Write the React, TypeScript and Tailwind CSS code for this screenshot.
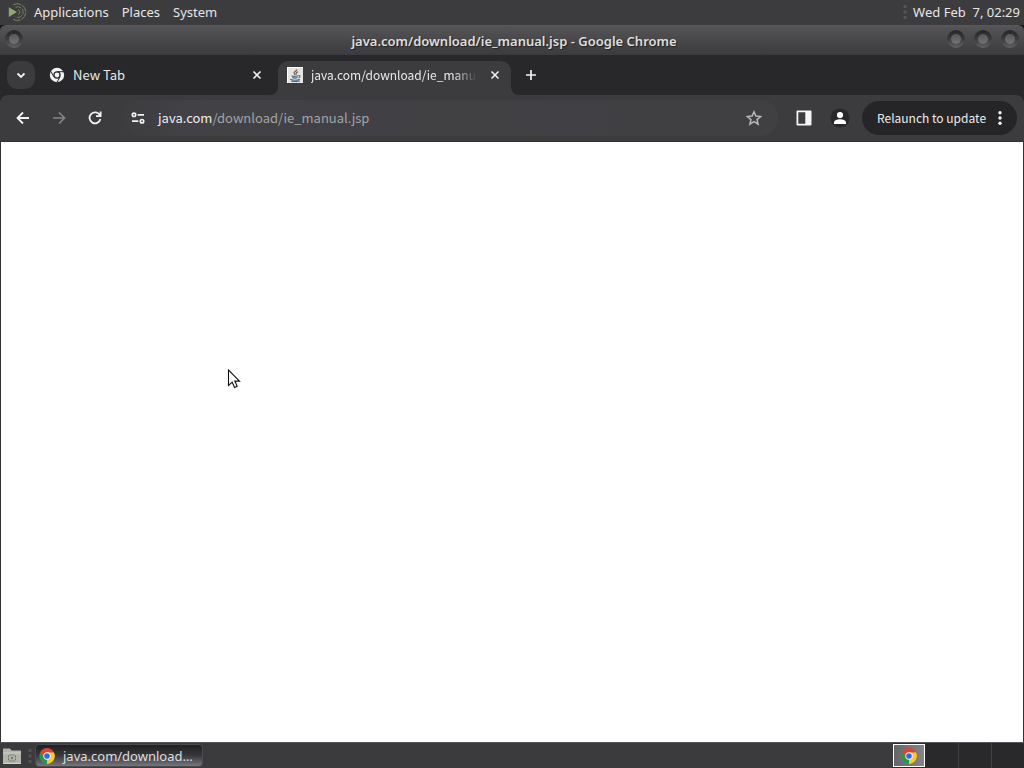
import type { ReactNode } from "react";

function ChromeLogo({ className }: { className?: string }) {
  return (
    <svg viewBox="0 0 48 48" className={className} aria-hidden="true">
      <path d="M24 24 L4.1 12.5 A23 23 0 0 1 43.9 12.5 Z" fill="#dd4436" />
      <path d="M24 24 L43.9 12.5 A23 23 0 0 1 24 47 Z" fill="#fbc92f" />
      <path d="M24 24 L24 47 A23 23 0 0 1 4.1 12.5 Z" fill="#279847" />
      <path d="M24 13.5 H44.4 L43.9 12.5 A23 23 0 0 0 4.1 12.5 L15 29 Z" fill="#dd4436" />
      <path d="M33.1 29.2 L22.9 47 A23 23 0 0 0 44.4 13.5 H24 Z" fill="#fbc92f" />
      <circle cx="24" cy="24" r="11" fill="#fff" />
      <circle cx="24" cy="24" r="8.5" fill="#2f6de0" />
    </svg>
  );
}

function ChromeMono() {
  return (
    <svg viewBox="0 0 16 16" className="size-4 shrink-0" aria-hidden="true">
      <circle cx="8" cy="8" r="7.2" fill="#f2f2f4" />
      <circle cx="8" cy="8" r="3.7" fill="#29292b" />
      <circle cx="8" cy="8" r="2.4" fill="#f2f2f4" />
      <path d="M8 4.7h6.8M4.9 9.8 1.6 4.1M11.1 9.8 7.8 15.5" stroke="#29292b" strokeWidth="1" />
    </svg>
  );
}

function JavaIcon() {
  return (
    <svg viewBox="0 0 16 16" className="size-4 shrink-0" aria-hidden="true">
      <rect width="16" height="16" fill="#e4e4e1" />
      <path d="M0 .5h16M.5 0v16" stroke="#fff" />
      <path d="M9.8 2.4c.5 1.8-3.9 2.4-2.4 4.4l.8 1.2M11.2 4.8C9.2 5.4 8.6 6.1 9.5 7.6" fill="none" stroke="#75604e" strokeWidth="1.2" />
      <path d="M4.5 8.8c1.8.7 4.9.6 6.5 0M5.2 10.6c1.6.6 3.6.6 5.2 0M11.4 8.6c2.2-.5 2 1.5.2 2.1M3.2 12.3c2.8 1.2 7 1 9.6 0M4.2 14c2.7.7 6.2.6 8.6-.3" fill="none" stroke="#44678c" strokeWidth="1.1" />
    </svg>
  );
}

function MateLogo() {
  return (
    <svg viewBox="0 0 20 20" className="size-5" fill="none" aria-hidden="true">
      <path d="M.8 5.2 9 10 .8 15Z" fill="#8fa66d" />
      <path d="M5.2 2.8A8.4 8.4 0 1 1 5.2 17.4" stroke="#76865f" strokeDasharray="8 1" />
      <path d="M7.5 5.2A5.4 5.4 0 1 1 7.5 15" stroke="#76865f" strokeDasharray="6 1" />
      <path d="M10 7.6a2.6 2.6 0 0 1 0 5" stroke="#76865f" />
    </svg>
  );
}

function WindowButton({ label }: { label: string }) {
  return (
    <button
      aria-label={label}
      className="flex size-[18px] items-center justify-center rounded-full bg-linear-to-b from-[#252527] via-[#3c3c3e] to-[#626361]"
    >
      <span className="size-2.5 rounded-full bg-linear-to-b from-[#58585a] to-[#737375]" />
    </button>
  );
}

function Close({ label }: { label: string }) {
  return (
    <button aria-label={label} className="flex size-4 shrink-0 items-center justify-center">
      <svg viewBox="0 0 16 16" className="size-4" aria-hidden="true">
        <path d="m4.5 4.5 7 7m0-7-7 7" stroke="#f0f0f2" strokeWidth="1.6" />
      </svg>
    </button>
  );
}

function Grip() {
  return (
    <svg viewBox="0 0 4 16" className="h-4 w-1" aria-hidden="true">
      <path d="M2 1v14" stroke="#555553" strokeWidth="3" strokeDasharray="3 2.5" />
    </svg>
  );
}

function ToolButton({ label, children }: { label: string; children: ReactNode }) {
  return (
    <button aria-label={label} className="flex size-5 shrink-0 items-center justify-center">
      {children}
    </button>
  );
}

function TopPanel() {
  return (
    <header className="flex h-[25px] items-center bg-[#3c3c3e] pr-1 pb-0.5 pl-2 text-[#e6e6e6]">
      <nav className="flex items-center">
        <MateLogo />
        <button className="ml-1.5">Applications</button>
        <button className="ml-[13px]">Places</button>
        <button className="ml-[13px]">System</button>
      </nav>
      <div className="ml-auto flex items-center gap-1.5">
        <Grip />
        <time className="whitespace-pre">Wed Feb  7, 02:29</time>
      </div>
    </header>
  );
}

function TitleBar() {
  return (
    <div className="flex h-[30px] items-center rounded-t-md border-t border-[#59595b] bg-linear-to-b from-[#555557] to-[#3b3b3d] px-[5px] pb-1">
      <div className="flex w-[76px]">
        <WindowButton label="Window menu" />
      </div>
      <h1 className="flex-1 pt-1 text-center font-semibold text-[#dededf] [text-shadow:1px_1px_1px_#222]">
        java.com/download/ie_manual.jsp - Google Chrome
      </h1>
      <div className="flex w-[72px] justify-end gap-[9px]">
        <WindowButton label="Minimize" />
        <WindowButton label="Maximize" />
        <WindowButton label="Close window" />
      </div>
    </div>
  );
}

function TabStrip() {
  return (
    <div className="flex h-10 items-end bg-[#28282a] font-['Noto_Sans_CJK_SC','Noto_Sans',sans-serif] text-xs leading-5 text-[#e8e8ea]">
      <button aria-label="Search tabs" className="mb-1.5 ml-[7px] flex size-7 items-center justify-center rounded-[10px] bg-[#3b3b3d]">
        <svg viewBox="0 0 16 16" className="size-4" fill="none" aria-hidden="true">
          <path d="m4.5 6.5 3.5 3.5 3.5-3.5" stroke="#f2f2f4" strokeWidth="1.8" />
        </svg>
      </button>
      <div className="flex h-10 w-[235px] items-center pr-[5px] pl-3.5">
        <ChromeMono />
        <span className="ml-2 flex-1 text-[13px]">New Tab</span>
        <Close label="Close New Tab" />
      </div>
      <svg viewBox="0 0 8 8" className="size-2" aria-hidden="true">
        <path d="M8 0v8H0a8 8 0 0 0 8-8" fill="#3c3c3e" />
      </svg>
      <div className="flex h-[34px] w-[233px] items-center rounded-t-[10px] bg-[#3c3c3e] pr-2 pb-1.5 pl-[9px]">
        <JavaIcon />
        <span className="ml-2 w-[166px] overflow-hidden whitespace-nowrap [mask-image:linear-gradient(to_right,#000_86%,transparent)]">
          java.com/download/ie_manual.jsp
        </span>
        <span className="ml-auto flex"><Close label="Close java.com" /></span>
      </div>
      <svg viewBox="0 0 8 8" className="size-2" aria-hidden="true">
        <path d="M0 0v8h8a8 8 0 0 1-8-8" fill="#3c3c3e" />
      </svg>
      <button aria-label="New tab" className="mb-2.5 ml-0.5 flex size-5 items-center justify-center">
        <svg viewBox="0 0 16 16" className="size-4" aria-hidden="true">
          <path d="M8 3v10M3 8h10" stroke="#f2f2f4" strokeWidth="1.7" />
        </svg>
      </button>
    </div>
  );
}

function Toolbar() {
  return (
    <div className="bg-[#28282a] font-['Noto_Sans_CJK_SC','Noto_Sans',sans-serif]">
      <div className="flex h-[47px] items-center rounded-t-lg border-b border-[#333234] bg-[#3c3c3e] pr-[7px] pl-[13px]">
        <div className="flex gap-4">
          <ToolButton label="Back">
            <svg viewBox="0 0 20 20" className="size-5" fill="none" stroke="#f2f2f4" strokeWidth="1.8" aria-hidden="true">
              <path d="M16 10H4.8M10 4.5 4.5 10l5.5 5.5" />
            </svg>
          </ToolButton>
          <ToolButton label="Forward">
            <svg viewBox="0 0 20 20" className="size-5" fill="none" stroke="#858587" strokeWidth="1.7" aria-hidden="true">
              <path d="M4 10h11.2M10 4.5l5.5 5.5-5.5 5.5" />
            </svg>
          </ToolButton>
          <ToolButton label="Reload">
            <svg viewBox="0 0 20 20" className="size-5" fill="none" stroke="#f2f2f4" strokeWidth="1.8" aria-hidden="true">
              <path d="M15 7.5A5.5 5.5 0 1 0 15.4 11M15.6 3.5v4.7H11" />
            </svg>
          </ToolButton>
        </div>
        <div className="ml-4 flex h-9 min-w-0 flex-1 items-center rounded-full bg-linear-to-r from-[#3d3d40] via-[#424246] via-10% to-[#404043] pr-3.5 pl-[7px]">
          <ToolButton label="View site information">
            <svg viewBox="0 0 20 20" className="size-5" fill="none" stroke="#f2f2f4" strokeWidth="1.7" aria-hidden="true">
              <circle cx="6" cy="6.8" r="1.7" />
              <path d="M9.7 6.8H16M4 13.2h6.3" />
              <circle cx="14" cy="13.2" r="1.7" />
            </svg>
          </ToolButton>
          <a href="#address" className="ml-2.5 flex-1 text-[#a3a3a6]">
            <span className="text-[#eeeeef]">java.com</span>/download/ie_manual.jsp
          </a>
          <ToolButton label="Bookmark this tab">
            <svg viewBox="0 0 20 20" className="size-5" fill="none" stroke="#b9b9bc" strokeWidth="1.5" aria-hidden="true">
              <path d="m10 3.8 1.9 4.3 4.7.4-3.6 3.1 1.1 4.6-4.1-2.5-4.1 2.5L7 11.6 3.4 8.5l4.7-.4Z" />
            </svg>
          </ToolButton>
        </div>
        <div className="ml-4 flex items-center gap-4">
          <ToolButton label="Side panel">
            <svg viewBox="0 0 20 20" className="size-5" aria-hidden="true">
              <path fillRule="evenodd" d="M3.5 2.5h13a1 1 0 0 1 1 1v13a1 1 0 0 1-1 1h-13a1 1 0 0 1-1-1v-13a1 1 0 0 1 1-1Zm.8 1.8v11.4h7V4.3Z" fill="#f5f5f7" />
            </svg>
          </ToolButton>
          <ToolButton label="Profile">
            <svg viewBox="0 0 20 20" className="size-5" aria-hidden="true">
              <circle cx="10" cy="10" r="9.5" fill="#28282a" />
              <circle cx="10" cy="7" r="3.1" fill="#fff" />
              <path d="M4 16v-1.4c0-2.4 3.5-3.4 6-3.4s6 1 6 3.4V16Z" fill="#fff" />
            </svg>
          </ToolButton>
        </div>
        <button className="ml-3 flex h-[34px] w-[155px] items-center justify-between rounded-full bg-[#252527] pr-[15px] pl-[15px] text-xs whitespace-nowrap text-[#ececee]">
          Relaunch to update
          <svg viewBox="0 0 4 16" className="h-4 w-1" fill="#f2f2f4" aria-hidden="true">
            <circle cx="2" cy="2.7" r="1.7" />
            <circle cx="2" cy="8" r="1.7" />
            <circle cx="2" cy="13.3" r="1.7" />
          </svg>
        </button>
      </div>
    </div>
  );
}

function Cursor() {
  return (
    <svg viewBox="0 0 14 20" className="absolute top-[227px] left-[226px] h-5 w-3.5" aria-hidden="true">
      <path d="M1.5 1v15.5l3.7-3.3 2.4 5.2 2.6-1.2-2.4-5.1h4.7Z" fill="#fff" stroke="#111" strokeWidth="1.1" />
    </svg>
  );
}

function BottomPanel() {
  return (
    <footer className="flex h-[26px] items-center border-t border-[#565658] bg-[#3b3b3d] text-[#dededf]">
      <button aria-label="Show desktop" className="ml-0.5">
        <svg viewBox="0 0 20 20" className="size-5" aria-hidden="true">
          <path d="M1 4.5V2.5h7l1.5 2H19V18H1Z" fill="#b2b5a9" />
          <path d="M1 7h18M1 17.5h18" stroke="#d0d2c8" />
          <rect x="6.5" y="9" width="7" height="6" rx="1" fill="none" stroke="#70736b" strokeDasharray="2 1" />
          <circle cx="10" cy="12" r="1.2" fill="#777a71" />
        </svg>
      </button>
      <span className="ml-1.5 flex"><Grip /></span>
      <button className="ml-[3px] flex h-[23px] w-[168px] items-center rounded-sm border border-[#4b4b4d] bg-linear-to-b from-[#202022] via-[#38383b] to-[#777680] pl-[3px] whitespace-nowrap">
        <ChromeLogo className="size-4 shrink-0" />
        <span className="ml-2">java.com/download…</span>
      </button>
      <div className="ml-auto flex h-full items-center bg-[#29292b]">
        <button aria-label="Workspace 1" className="flex h-[23px] w-8 items-center justify-center border border-white bg-linear-to-r from-[#666668] to-[#858587]">
          <ChromeLogo className="size-4" />
        </button>
        <button aria-label="Workspace 2" className="h-full w-[34px] border-r border-[#414143]" />
        <button aria-label="Workspace 3" className="h-full w-[33px] border-r border-[#414143]" />
        <button aria-label="Workspace 4" className="h-full w-8" />
      </div>
    </footer>
  );
}

export default function App() {
  return (
    <div className="flex min-h-screen flex-col bg-[#171719] font-['Noto_Sans','Open_Sans',sans-serif] text-[13px] leading-5">
      <TopPanel />
      <TitleBar />
      <TabStrip />
      <Toolbar />
      <main className="relative flex-1 border-x border-[#333335] bg-white" aria-label="Page content">
        <Cursor />
      </main>
      <BottomPanel />
    </div>
  );
}
